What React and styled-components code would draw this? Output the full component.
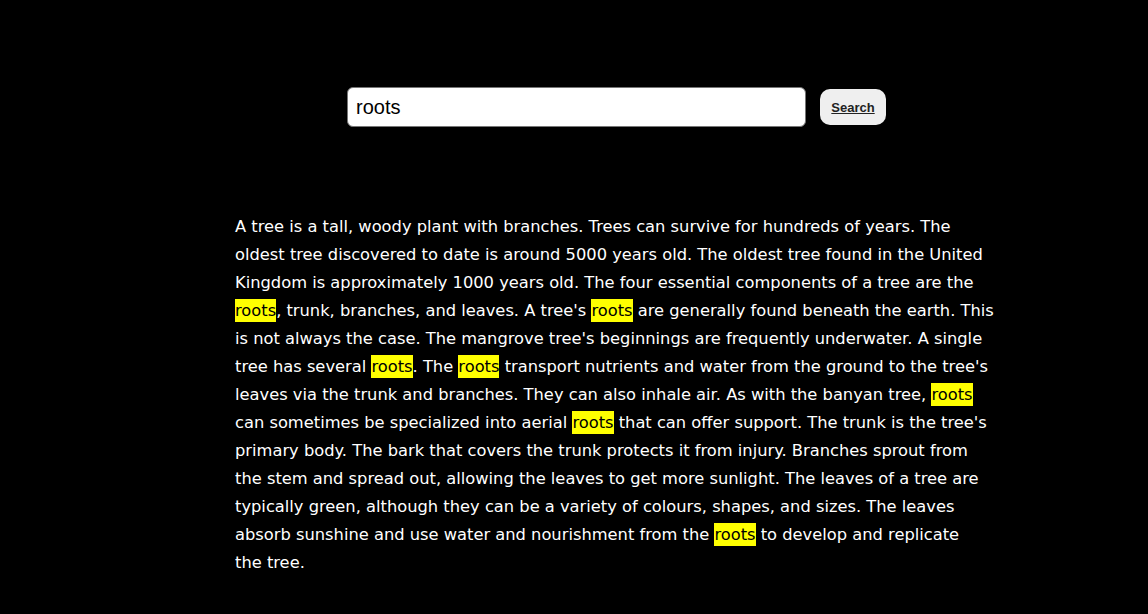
import React, { useState } from 'react';
import styled, { createGlobalStyle } from 'styled-components';

const GlobalStyle = createGlobalStyle`
  html, body {
    margin: 0;
    padding: 0;
    background: #000;
  }
  body {
    font-family: "DejaVu Sans", "Noto Sans", sans-serif;
  }
`

const Page = styled.div`
  min-height: 614px;
  background: #000;
  color: #fff;
  padding-top: 87px;
  box-sizing: border-box;
`
const SearchBar = styled.form`
  display: flex;
  align-items: center;
  gap: 14px;
  padding-left: 347px;
`
const Input = styled.input`
  width: 459px;
  height: 40px;
  box-sizing: border-box;
  border: 1px solid #767676;
  border-radius: 6px;
  padding: 0 8px;
  font-family: "Liberation Sans", Arial, sans-serif;
  font-size: 20px;
  color: #000;
  background: #fff;
  outline: none;
`
const Button = styled.button`
  width: 66px;
  height: 36px;
  border: none;
  border-radius: 10px;
  background: #efefef;
  color: #222;
  font-family: "Liberation Sans", Arial, sans-serif;
  font-size: 13px;
  font-weight: 700;
  text-decoration: underline;
  cursor: pointer;
`
const Article = styled.p`
  margin: 86px 0 0 235px;
  width: 760px;
  font-size: 16.3px;
  line-height: 28px;
`
const Line = styled.span`
  display: block;
  white-space: nowrap;
`
const Mark = styled.mark`
  background: #ffff00;
  color: #000;
  padding: 2px 0;
`

// line breaks as they fall in the original layout
const LINES = [
  "A tree is a tall, woody plant with branches. Trees can survive for hundreds of years. The",
  "oldest tree discovered to date is around 5000 years old. The oldest tree found in the United",
  "Kingdom is approximately 1000 years old. The four essential components of a tree are the",
  "roots, trunk, branches, and leaves. A tree's roots are generally found beneath the earth. This",
  "is not always the case. The mangrove tree's beginnings are frequently underwater. A single",
  "tree has several roots. The roots transport nutrients and water from the ground to the tree's",
  "leaves via the trunk and branches. They can also inhale air. As with the banyan tree, roots",
  "can sometimes be specialized into aerial roots that can offer support. The trunk is the tree's",
  "primary body. The bark that covers the trunk protects it from injury. Branches sprout from",
  "the stem and spread out, allowing the leaves to get more sunlight. The leaves of a tree are",
  "typically green, although they can be a variety of colours, shapes, and sizes. The leaves",
  "absorb sunshine and use water and nourishment from the roots to develop and replicate",
  "the tree.",
]

const Highlighted = ({ text, term }) => {
  if (!term) return text
  const parts = text.split(new RegExp(`(${term})`, 'gi'))
  return parts.map((p, i) =>
    p.toLowerCase() === term.toLowerCase() ? <Mark key={i}>{p}</Mark> : p
  )
}

export default function App() {
  const [query, setQuery] = useState('roots')
  const [term, setTerm] = useState('roots')

  return (
    <Page>
      <GlobalStyle />
      <SearchBar onSubmit={e => { e.preventDefault(); setTerm(query) }}>
        <Input value={query} onChange={e => setQuery(e.target.value)} />
        <Button type="submit">Search</Button>
      </SearchBar>
      <Article>
        {LINES.map((l, i) => (
          <Line key={i}>
            <Highlighted text={l} term={term} />
          </Line>
        ))}
      </Article>
    </Page>
  )
}
